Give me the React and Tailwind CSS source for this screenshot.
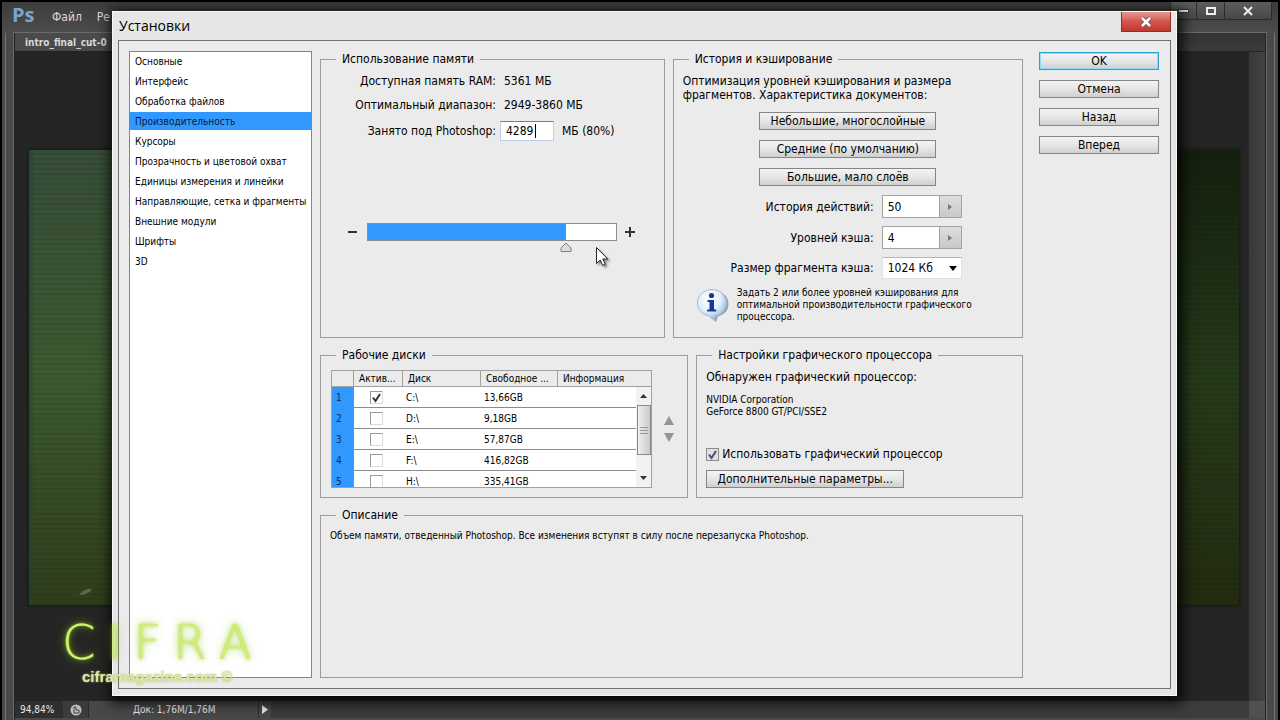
import React, { useState } from 'react';

const sections = [
    'Основные',
    'Интерфейс',
    'Обработка файлов',
    'Производительность',
    'Курсоры',
    'Прозрачность и цветовой охват',
    'Единицы измерения и линейки',
    'Направляющие, сетка и фрагменты',
    'Внешние модули',
    'Шрифты',
    '3D',
];

const disks = [
    { id: 1, active: true, name: 'C:\\', free: '13,66GB' },
    { id: 2, active: false, name: 'D:\\', free: '9,18GB' },
    { id: 3, active: false, name: 'E:\\', free: '57,87GB' },
    { id: 4, active: false, name: 'F:\\', free: '416,82GB' },
    { id: 5, active: false, name: 'H:\\', free: '335,41GB' },
];

const Group = ({ title, className = '', children }) => (
    <fieldset className={`min-w-0 border border-[#9b9b9b] px-[9px] ${className}`}>
        <legend className="ml-[6px] px-1.5 text-xs leading-4">{title}</legend>
        {children}
    </fieldset>
);

const PushButton = ({ className = '', primary, children }) => (
    <button
        type="button"
        className={`h-[18px] border bg-linear-to-b from-[#f4f4f4] via-[#e6e6e6] to-[#cfcfcf] text-xs leading-4 ${primary ? 'border-[#2f9fd0] shadow-[inset_0_0_0_1px_#8fdcf5]' : 'border-[#858585]'} ${className}`}
    >
        {children}
    </button>
);

const StepField = ({ id, label, value }) => (
    <div className="flex items-center gap-2">
        <label htmlFor={id} className="w-[191px] text-right">{label}</label>
        <div className="flex h-[23px] w-20 border border-[#a3a3a3]">
            <input id={id} defaultValue={value} className="min-w-0 flex-1 bg-white pl-[5px] outline-none" />
            <button type="button" aria-label={`${label} список`} className="flex w-[22px] items-center justify-center border-l border-[#a3a3a3] bg-linear-to-b from-[#dedede] to-[#c9c9c9]">
                <svg width="4" height="6" viewBox="0 0 4 6"><path d="M0 0l4 3-4 3z" fill="#777" /></svg>
            </button>
        </div>
    </div>
);

const CheckBox = ({ id, checked, tinted, label }) => {
    const [on, setOn] = useState(checked);

    return (
        <span className="relative block size-[13px]">
            <input
                id={id}
                type="checkbox"
                aria-label={label}
                checked={on}
                onChange={() => setOn(!on)}
                className={`block size-[13px] appearance-none border ${tinted ? 'border-[#8a8a8a] bg-[#dde0e6]' : 'border-r-[#dcdcdc] border-b-[#dcdcdc] border-t-[#9a9a9a] border-l-[#9a9a9a] bg-white'}`}
            />
            {on && (
                <svg className="pointer-events-none absolute inset-0" width="13" height="13" viewBox="0 0 13 13" fill="none">
                    <path d="M3 6.5l2.5 3.5L10 3" stroke={tinted ? '#4b5068' : '#333'} strokeWidth="2" />
                </svg>
            )}
        </span>
    );
};

const MemoryGroup = () => {
    const [percent, setPercent] = useState(80);

    return (
        <Group title="Использование памяти" className="flex-[344]">
            <div className="flex h-6 items-center gap-2 pt-1">
                <span className="w-[166px] text-right">Доступная память RAM:</span>
                <span>5361 МБ</span>
            </div>
            <div className="flex h-6 items-center gap-2 pt-1">
                <span className="w-[166px] text-right">Оптимальный диапазон:</span>
                <span>2949-3860 МБ</span>
            </div>
            <div className="flex h-7 items-center gap-1 pt-1">
                <label htmlFor="memory" className="w-[166px] text-right">Занято под Photoshop:</label>
                <span className="relative">
                    <input id="memory" defaultValue="4289" className="block h-5 w-[54px] border border-[#bcd0e4] border-t-[#5f87ad] bg-white pl-[5px] outline-none" />
                    <span className="absolute top-[3px] left-[35px] h-3.5 w-px bg-black" />
                </span>
                <span className="ml-1">МБ (80%)</span>
            </div>

            <div className="mt-20 flex items-center gap-2 pl-[18px]">
                <button type="button" aria-label="Меньше" className="flex size-[11px] items-center justify-center">
                    <svg width="11" height="11" viewBox="0 0 11 11"><path d="M0 5h9" stroke="#333" strokeWidth="2" /></svg>
                </button>
                <div className="relative h-[18px] w-[250px] border border-[#8c8c8c] bg-white">
                    <div className="h-full border-r border-[#8c8c8c] bg-[#3198fd]" style={{ width: `${percent}%` }} />
                    <svg className="absolute top-[18px] -ml-1.5" style={{ left: `${percent}%` }} width="12" height="11" viewBox="0 0 12 11">
                        <path d="M6 1l5 5v3.500H1V6z" fill="#dcdcdc" stroke="#808080" />
                    </svg>
                    <input
                        type="range"
                        aria-label="Объем памяти"
                        value={percent}
                        onChange={e => setPercent(e.target.value)}
                        className="absolute inset-0 h-7 w-full opacity-0"
                    />
                </div>
                <button type="button" aria-label="Больше" className="flex size-[11px] items-center justify-center">
                    <svg width="11" height="11" viewBox="0 0 11 11"><path d="M0 5h10M5 0v10" stroke="#333" strokeWidth="2" /></svg>
                </button>
            </div>
        </Group>
    );
};

const InfoIcon = () => (
    <svg className="shrink-0" width="34" height="34" viewBox="0 0 34 34">
        <defs>
            <radialGradient id="bubble" cx="0.4" cy="0.3" r="0.75">
                <stop offset="0" stopColor="#fff" />
                <stop offset="0.55" stopColor="#e0eefb" />
                <stop offset="1" stopColor="#78a9de" />
            </radialGradient>
        </defs>
        <path d="M18 3c8.500 0 14.500 5.500 14.500 13 0 6.500-4.500 11-11 12.500L20.500 34l-6-5z" fill="#80858e" opacity="0.75" />
        <path d="M16 1.500C8 1.500 1.500 7.500 1.500 15c0 6.500 4.500 11.500 11 12.800l6.500 5.200v-5c6.500-1.200 11.500-6.500 11.500-13C30.500 7.500 24 1.500 16 1.500z" fill="url(#bubble)" stroke="#a3bbd5" />
        <circle cx="15.500" cy="7.500" r="2.600" fill="#14399b" />
        <path d="M11.500 12h6.500v9.500h2.200V23.500h-9v-2h2.300v-7.500h-2z" fill="#14399b" />
    </svg>
);

const CacheGroup = () => (
    <Group title="История и кэширование" className="flex-[350] pb-3.5">
        <p className="mt-[7px] leading-[14px]">
            Оптимизация уровней кэширования и размера<br />фрагментов. Характеристика документов:
        </p>
        <div className="mt-2.5 flex flex-col items-center gap-2.5">
            <PushButton className="w-[177px]">Небольшие, многослойные</PushButton>
            <PushButton className="w-[177px]">Средние (по умолчанию)</PushButton>
            <PushButton className="w-[177px]">Большие, мало слоёв</PushButton>
        </div>
        <div className="mt-[9px] flex flex-col gap-2">
            <StepField id="history" label="История действий:" value="50" />
            <StepField id="levels" label="Уровней кэша:" value="4" />
            <div className="flex items-center gap-2">
                <label htmlFor="tile" className="w-[191px] text-right">Размер фрагмента кэша:</label>
                <div className="relative">
                    <select id="tile" className="block h-[22px] w-20 appearance-none border border-[#e2e2e2] border-t-[#b5b5b5] bg-white pl-[5px]">
                        <option>1024 Кб</option>
                    </select>
                    <svg className="pointer-events-none absolute top-[9px] right-[5px]" width="8" height="5" viewBox="0 0 8 5"><path d="M0 0h8L4 5z" /></svg>
                </div>
            </div>
        </div>
        <div className="mt-2 flex items-center gap-[7px] pl-[13px]">
            <InfoIcon />
            <p className="text-[10px] leading-3">
                Задать 2 или более уровней кэширования для<br />оптимальной производительности графического<br />процессора.
            </p>
        </div>
    </Group>
);

const DiskGroup = () => (
    <Group title="Рабочие диски" className="flex-[370] pb-[9px]">
        <div className="mt-[7px] flex items-center gap-3 pl-px">
            <div className="relative h-[118px] w-[321px] overflow-hidden border border-[#a0a0a0] bg-white text-[10px]">
                <table className="w-full table-fixed border-separate border-spacing-0">
                    <thead>
                        <tr className="h-4 bg-[#ebebeb] text-left">
                            <th className="w-[22px] border-r border-b border-[#a0a0a0]" aria-label="№"></th>
                            <th className="w-[49px] border-r border-b border-[#a0a0a0] pl-[5px] font-normal">Актив...</th>
                            <th className="w-[78px] border-r border-b border-[#a0a0a0] pl-[5px] font-normal">Диск</th>
                            <th className="w-[77px] border-r border-b border-[#a0a0a0] pl-[5px] font-normal whitespace-nowrap">Свободное ...</th>
                            <th className="border-b border-[#a0a0a0] pl-[5px] font-normal">Информация</th>
                        </tr>
                    </thead>
                    <tbody>
                        {disks.map(disk => (
                            <tr key={disk.id} className="h-[21px]">
                                <td className="border-r border-[#8c8c8c] bg-[#3198fd] pl-1 text-[#0c2c66]">{disk.id}</td>
                                <td className="border-b border-[#8c8c8c] pl-4"><CheckBox checked={disk.active} label={disk.name} /></td>
                                <td className="border-b border-[#8c8c8c] pt-px pl-[3px]">{disk.name}</td>
                                <td className="border-b border-[#8c8c8c] pt-px pl-[3px]">{disk.free}</td>
                                <td className="border-b border-[#8c8c8c]"></td>
                            </tr>
                        ))}
                    </tbody>
                </table>
                {/* list scrollbar */}
                <div className="absolute top-4 right-0 bottom-0 flex w-[15px] flex-col items-center bg-[#f2f2f2]">
                    <button type="button" aria-label="Вверх" className="flex h-[18px] items-center">
                        <svg width="7" height="4" viewBox="0 0 7 4"><path d="M0 4h7L3.500 0z" fill="#333" /></svg>
                    </button>
                    <div className="flex h-[50px] w-3.5 flex-col items-center justify-center gap-0.5 border border-[#8a8a8a] bg-linear-to-r from-[#efefef] to-[#cacaca]">
                        <span className="h-px w-2 bg-[#999]" />
                        <span className="h-px w-2 bg-[#999]" />
                        <span className="h-px w-2 bg-[#999]" />
                    </div>
                    <button type="button" aria-label="Вниз" className="mt-auto flex h-[18px] items-center">
                        <svg width="7" height="4" viewBox="0 0 7 4"><path d="M0 0h7L3.500 4z" fill="#333" /></svg>
                    </button>
                </div>
            </div>
            <div className="flex flex-col gap-2">
                <button type="button" aria-label="Выше">
                    <svg width="10" height="9" viewBox="0 0 10 9" className="block"><path d="M0 9h10L5 0z" fill="#949494" /></svg>
                </button>
                <button type="button" aria-label="Ниже">
                    <svg width="10" height="9" viewBox="0 0 10 9" className="block"><path d="M0 0h10L5 9z" fill="#949494" /></svg>
                </button>
            </div>
        </div>
    </Group>
);

const GpuGroup = () => (
    <Group title="Настройки графического процессора" className="flex-[326] pb-[9px]">
        <p className="mt-1.5 leading-4">Обнаружен графический процессор:</p>
        <p className="mt-[9px] text-[10px] leading-3">NVIDIA Corporation<br />GeForce 8800 GT/PCI/SSE2</p>
        <div className="mt-7 flex items-center gap-[3px]">
            <CheckBox id="gpu" checked tinted />
            <label htmlFor="gpu" className="leading-4">Использовать графический процессор</label>
        </div>
        <PushButton className="mt-2 w-[198px]">Дополнительные параметры...</PushButton>
    </Group>
);

const Preferences = () => {
    const [current, setCurrent] = useState('Производительность');

    return (
        <div role="dialog" aria-label="Установки" className="flex flex-1 flex-col border border-[#f8f8f8] bg-[#e6e6e6] px-[5px] pb-1.5 shadow-[2px_3px_12px_4px_rgba(0,0,0,0.8)]">
            <div className="flex h-7 items-start justify-between">
                <h1 className="pt-1 pl-px font-['Open_Sans','Noto_Sans',sans-serif] text-sm">Установки</h1>
                <button type="button" aria-label="Закрыть" className="flex h-5 w-[50px] items-center justify-center border border-t-0 border-[#8f2f2b] bg-linear-to-b from-[#e39a94] via-[#d2564e] to-[#c2362d]">
                    <svg width="14" height="12" viewBox="0 0 14 12">
                        <path d="M3 2l8 8M11 2l-8 8" stroke="#6b4a4a" strokeWidth="4.400" />
                        <path d="M3 2l8 8M11 2l-8 8" stroke="#fff" strokeWidth="2.600" />
                    </svg>
                </button>
            </div>
            <div className="flex flex-1 border border-[#707070] bg-[#ebebeb] pt-2.5 pr-[11px] pb-2.5 pl-2.5">
                <ul className="flex w-[183px] flex-col gap-0.5 border border-[#858585] bg-white text-[10px]">
                    {sections.map(name => (
                        <li key={name}>
                            <button
                                type="button"
                                onClick={() => setCurrent(name)}
                                className={`block h-[18px] w-full pt-0.5 pl-[5px] text-left leading-4 whitespace-nowrap ${name === current ? 'bg-[#3198fd] text-[#061a40]' : ''}`}
                            >
                                {name}
                            </button>
                        </li>
                    ))}
                </ul>
                <div className="ml-2 flex flex-1 flex-col gap-[9px]">
                    <div className="flex gap-2">
                        <MemoryGroup />
                        <CacheGroup />
                    </div>
                    <div className="flex gap-2">
                        <DiskGroup />
                        <GpuGroup />
                    </div>
                    <Group title="Описание" className="flex-1">
                        <p className="mt-[7px] text-[10px] leading-3">Объем памяти, отведенный Photoshop. Все изменения вступят в силу после перезапуска Photoshop.</p>
                    </Group>
                </div>
                <div className="ml-4 flex w-[120px] flex-col gap-2.5 pt-px">
                    <PushButton primary>OK</PushButton>
                    <PushButton>Отмена</PushButton>
                    <PushButton>Назад</PushButton>
                    <PushButton>Вперед</PushButton>
                </div>
            </div>
        </div>
    );
};

const EditorWindow = () => (
    <div className="flex flex-1 flex-col border-x-2 border-t-2 border-black bg-[#4a4a4a] text-[#d8d8d8]">
        <header className="flex h-[31px] items-start bg-linear-to-b from-[#3c3c3c] to-[#4c4c4c] pr-1.5 pl-2.5">
            <span className="w-10 font-['Open_Sans',sans-serif] text-xl leading-[26px] font-bold text-[#7ea2cf]">Ps</span>
            <nav className="flex gap-[15px] leading-[30px]">
                <a href="#file">Файл</a>
                <a href="#edit">Ре</a>
            </nav>
            <div className="ml-auto flex h-[18px] border border-t-0 border-[#2c2c2c] bg-linear-to-b from-[#5c5c5c] to-[#484848]">
                <button type="button" aria-label="Свернуть" className="flex w-[26px] items-center justify-center border-r border-[#2c2c2c]">
                    <svg width="11" height="4" viewBox="0 0 11 4"><path d="M0.500 0.500h10v3h-10z" fill="#eee" stroke="#333" /></svg>
                </button>
                <button type="button" aria-label="Развернуть" className="flex w-7 items-center justify-center border-r border-[#2c2c2c]">
                    <svg width="12" height="10" viewBox="0 0 12 10" fill="none"><path d="M2 2h8v6H2z" stroke="#eee" strokeWidth="2" /></svg>
                </button>
                <button type="button" aria-label="Закрыть окно" className="flex w-[46px] items-center justify-center">
                    <svg width="12" height="10" viewBox="0 0 12 10"><path d="M2 1l8 8M10 1L2 9" stroke="#eee" strokeWidth="2" /></svg>
                </button>
            </div>
        </header>

        <div className="flex flex-1 px-[3px]">
            <div className="w-[9px] border-l border-[#767676]" />
            <main className="flex flex-1 flex-col border-x border-[#222] outline outline-[#6a6a6a]">
                <div className="flex h-[19px] items-center border-b border-[#222] bg-linear-to-b from-[#333] to-[#3c3c3c]">
                    <span className="flex h-full w-40 items-center bg-[#4a4a4a] pt-0.5 pl-2.5 text-[10px] font-bold">intro_final_cut-0</span>
                </div>
                <div className="flex flex-1 bg-[#252525]">
                    <div className="flex flex-1 pt-[98px] pr-2.5 pb-24 pl-3.5">
                        {/* opened picture: green cloth, lit from the left */}
                        <div className="relative flex flex-1 shadow-[0_0_3px_1px_#141a14]">
                            <div className="flex-1 bg-linear-to-b from-[#374d38] via-[#3c5a30] to-[#2f3e1c]" />
                            <div className="flex-1 bg-linear-to-b from-[#14200e] via-[#253a1a] to-[#232c10]" />
                            <div className="absolute inset-0 bg-[repeating-linear-gradient(0deg,rgba(0,0,0,0.07)_0px,rgba(0,0,0,0.07)_2px,transparent_2px,transparent_5px)]" />
                            <div className="absolute inset-0 bg-linear-to-r from-[#1e4038]/60 to-transparent to-[6px]" />
                            <svg className="absolute bottom-2 left-12" width="18" height="10" viewBox="0 0 18 10"><path d="M2 8c3-4 8-7 13-6-2 4-8 6-13 6z" fill="#7f9674" opacity="0.5" /></svg>
                        </div>
                    </div>
                    <div className="w-4 bg-linear-to-r from-[#383838] to-[#434343]" />
                </div>
                <footer className="mb-0.5 flex h-[17px] items-center bg-[#3c3c3c] text-[10px] leading-[18px] text-[#e8e8e8]">
                    <span className="h-full w-12 bg-[#2f2f2f] pl-[5px]">94,84%</span>
                    <span className="flex h-full w-[25px] items-center justify-center bg-[#3c3c3c]">
                        <svg width="12" height="12" viewBox="0 0 12 12">
                            <circle cx="6" cy="6" r="5.500" fill="#bdbdbd" />
                            <path d="M4 3h2v3h3v3H4z" fill="none" stroke="#444" />
                        </svg>
                    </span>
                    <span className="h-full w-[171px] border-x border-[#2a2a2a] bg-[#484848] pl-11">Док: 1,76M/1,76M</span>
                    <button type="button" aria-label="Показать" className="flex h-full w-3 items-center justify-center bg-[#484848]">
                        <svg width="6" height="9" viewBox="0 0 6 9"><path d="M0 0l6 4.500L0 9z" fill="#eee" /></svg>
                    </button>
                    <span className="ml-auto h-full w-4 bg-[#505050]" />
                </footer>
            </main>
            <div className="w-[9px] border-r border-[#767676]" />
        </div>
    </div>
);

const Watermark = () => (
    <div className="pointer-events-none absolute bottom-[33px] left-[62px] font-bold">
        <div className="flex gap-3 font-['DejaVu_Sans','DejaVu_Sans_Light',sans-serif] text-5xl leading-[50px] font-extralight text-[#d3ee78] [text-shadow:0_0_1px_#b4dc3c,0_0_4px_rgba(155,208,30,0.7),0_0_10px_rgba(140,196,20,0.7)]">
            {['C', 'I', 'F', 'R', 'A'].map(letter => <span key={letter}>{letter}</span>)}
        </div>
        <p className="pl-5 font-['Liberation_Sans',sans-serif] text-[15px] leading-5 text-[#dfe8a8] [text-shadow:0_0_2px_#a3b552]">ciframagazine.com ©</p>
    </div>
);

const App = () => {
    return (
        <div className="relative flex min-h-screen flex-col bg-black font-['DejaVu_Sans_Condensed','DejaVu_Sans',sans-serif] text-xs text-black">
            <EditorWindow />
            <div className="absolute inset-0 flex pt-[11px] pr-[103px] pb-6 pl-28">
                <Preferences />
            </div>
            <Watermark />
            <svg className="pointer-events-none absolute top-[246px] left-[595px] drop-shadow-[2px_2px_1px_rgba(0,0,0,0.4)]" width="14" height="21" viewBox="0 0 14 21">
                <path d="M1.500 1.500v16l3.700-3.500 2.500 5.500 2.600-1.200-2.500-5.300h5z" fill="#fff" stroke="#222" />
            </svg>
        </div>
    );
};

export default App;
